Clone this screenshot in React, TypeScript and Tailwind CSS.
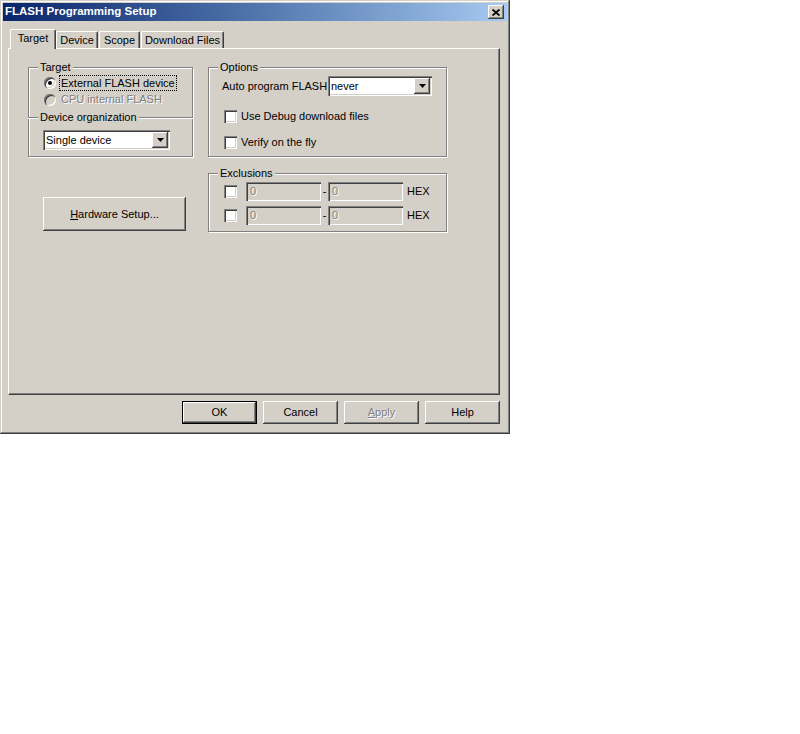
import React from 'react';

// classic 3D edges
const raised = 'shadow-[inset_-1px_-1px_0_#404040,inset_1px_1px_0_#ffffff,inset_-2px_-2px_0_#808080]';
const sunken = 'shadow-[inset_1px_1px_0_#808080,inset_2px_2px_0_#404040,inset_-1px_-1px_0_#ffffff,inset_-2px_-2px_0_#d4d0c8]';
const etched = 'border border-[#808080] shadow-[inset_1px_1px_0_#ffffff,1px_1px_0_#ffffff]';
const disabledText = 'text-[#808080] [text-shadow:1px_1px_0_#ffffff]';

function GroupLabel({ children }: { children: React.ReactNode }) {
    return (
        <span className="-mt-[7px] ml-[9px] self-start bg-[#d4d0c8] px-[2px] leading-[13px]">
            {children}
        </span>
    );
}

function Checkbox({ label }: { label?: string }) {
    return (
        <div className="flex h-[17px] items-center">
            <span className={`h-[13px] w-[13px] shrink-0 bg-white ${sunken}`} />
            {label && <span className="ml-[4px]">{label}</span>}
        </div>
    );
}

function DropArrow() {
    return (
        <span className={`flex h-[16px] w-[16px] items-center justify-center bg-[#d4d0c8] ${raised}`}>
            <svg width="7" height="4" viewBox="0 0 7 4">
                <path d="M0 0h7L3.5 4z" fill="#000" />
            </svg>
        </span>
    );
}

function Select({ value, width }: { value: string; width: string }) {
    return (
        <div className={`flex h-[20px] items-center justify-between bg-white p-[2px] ${sunken} ${width}`}>
            <span className="pl-[1px]">{value}</span>
            <DropArrow />
        </div>
    );
}

function Field() {
    return (
        <div className={`flex h-[19px] w-[75px] items-center bg-[#d4d0c8] pl-[4px] ${sunken} ${disabledText}`}>
            0
        </div>
    );
}

function Button({ children, isDefault }: { children: React.ReactNode; isDefault?: boolean }) {
    return (
        <button
            className={`flex h-[23px] w-[75px] items-center justify-center bg-[#d4d0c8] ${
                isDefault
                    ? 'border border-black shadow-[inset_-1px_-1px_0_#404040,inset_1px_1px_0_#ffffff,inset_-2px_-2px_0_#808080]'
                    : raised
            }`}
        >
            {children}
        </button>
    );
}

export default function App() {
    const tabs = [
        { name: 'Target', w: 'w-[46px]' },
        { name: 'Device', w: 'w-[42px]' },
        { name: 'Scope', w: 'w-[41px] ml-[1px]' },
        { name: 'Download Files', w: 'w-[83px] ml-[1px]' },
    ];

    return (
        <div className="h-[734px] w-full bg-white font-['Liberation_Sans',Arial,sans-serif] text-[11px] text-black">
            <div className="flex h-[434px] w-[510px] flex-col bg-[#d4d0c8] p-[3px] shadow-[inset_-1px_-1px_0_#404040,inset_1px_1px_0_#d4d0c8,inset_-2px_-2px_0_#808080,inset_2px_2px_0_#ffffff]">
                {/* title bar */}
                <div className="flex h-[18px] items-center justify-between bg-linear-to-r from-[#0a246a] to-[#a6caf0] pl-[2px] pr-[3px]">
                    <span className="text-[11.5px] font-bold text-white">FLASH Programming Setup</span>
                    <span className={`flex h-[14px] w-[16px] items-center justify-center bg-[#d4d0c8] ${raised}`}>
                        <svg width="8" height="7" viewBox="0 0 8 7">
                            <path d="M0.5 0.5l7 6M7.5 0.5l-7 6" stroke="#000" strokeWidth="1.8" />
                        </svg>
                    </span>
                </div>

                <div className="ml-[5px] mt-[8px] flex flex-col">
                    {/* tabs */}
                    <div className="flex h-[19px] items-end pl-[2px]">
                        {tabs.map((t, i) => (
                            <div
                                key={t.name}
                                className={`flex items-center justify-center rounded-t-[2px] border-l border-t border-white bg-[#d4d0c8] shadow-[inset_-1px_0_0_#808080] border-r border-r-[#404040] ${t.w} ${
                                    i === 0 ? 'relative z-10 -mb-px h-[20px] pb-[2px]' : 'h-[17px]'
                                }`}
                            >
                                {t.name}
                            </div>
                        ))}
                    </div>

                    {/* tab page */}
                    <div className="flex h-[347px] w-[492px] gap-[15px] border-l border-t border-white border-r border-b border-r-[#404040] border-b-[#404040] pl-[19px] pt-[18px] shadow-[inset_-1px_-1px_0_#808080]">
                        <div className="flex w-[165px] flex-col">
                            <div className={`flex h-[90px] flex-col ${etched}`}>
                                <GroupLabel>Target</GroupLabel>
                                <div className="flex h-[17px] items-center pl-[15px]">
                                    <span className={`flex h-[12px] w-[12px] items-center justify-center rounded-full bg-white ${sunken}`}>
                                        <span className="h-[4px] w-[4px] rounded-full bg-black" />
                                    </span>
                                    <span className="ml-[3px] border border-dotted border-black px-px leading-[14px]">
                                        External FLASH device
                                    </span>
                                </div>
                                <div className="flex h-[17px] items-center pl-[15px]">
                                    <span className={`h-[12px] w-[12px] rounded-full bg-[#d4d0c8] ${sunken}`} />
                                    <span className={`ml-[5px] ${disabledText}`}>CPU internal FLASH</span>
                                </div>
                                <div className="-mx-px mt-[9px] flex flex-col border-t border-[#808080] shadow-[inset_0_1px_0_#ffffff]">
                                    <span className="-mt-[7px] ml-[10px] self-start bg-[#d4d0c8] px-[2px] leading-[13px]">
                                        Device organization
                                    </span>
                                    <div className="ml-[15px] mt-[6px]">
                                        <Select value="Single device" width="w-[127px]" />
                                    </div>
                                </div>
                            </div>
                            <button className={`ml-[15px] mt-[40px] flex h-[34px] w-[143px] items-center justify-center bg-[#d4d0c8] ${raised}`}>
                                <span>
                                    <span className="underline">H</span>ardware Setup...
                                </span>
                            </button>
                        </div>

                        <div className="flex w-[239px] flex-col">
                            <div className={`flex h-[90px] flex-col ${etched}`}>
                                <GroupLabel>Options</GroupLabel>
                                <div className="mt-[2px] flex items-center pl-[13px]">
                                    <span className="w-[106px]">Auto program FLASH</span>
                                    <Select value="never" width="w-[104px]" />
                                </div>
                                <div className="mt-[12px] pl-[15px]">
                                    <Checkbox label="Use Debug download files" />
                                </div>
                                <div className="mt-[9px] pl-[15px]">
                                    <Checkbox label="Verify on the fly" />
                                </div>
                            </div>

                            <div className={`mt-[16px] flex h-[59px] flex-col ${etched}`}>
                                <GroupLabel>Exclusions</GroupLabel>
                                {[0, 1].map((row) => (
                                    <div key={row} className={`flex items-center pl-[15px] ${row === 0 ? 'mt-[2px]' : 'mt-[5px]'}`}>
                                        <Checkbox />
                                        <div className="ml-[9px]">
                                            <Field />
                                        </div>
                                        <span className="w-[7px] text-center">-</span>
                                        <Field />
                                        <span className="ml-[4px]">HEX</span>
                                    </div>
                                ))}
                            </div>
                        </div>
                    </div>

                    {/* dialog buttons */}
                    <div className="mt-[6px] flex w-[492px] justify-end gap-[6px]">
                        <Button isDefault>OK</Button>
                        <Button>Cancel</Button>
                        <Button>
                            <span className={disabledText}>
                                <span className="underline">A</span>pply
                            </span>
                        </Button>
                        <Button>Help</Button>
                    </div>
                </div>
            </div>
        </div>
    );
}
